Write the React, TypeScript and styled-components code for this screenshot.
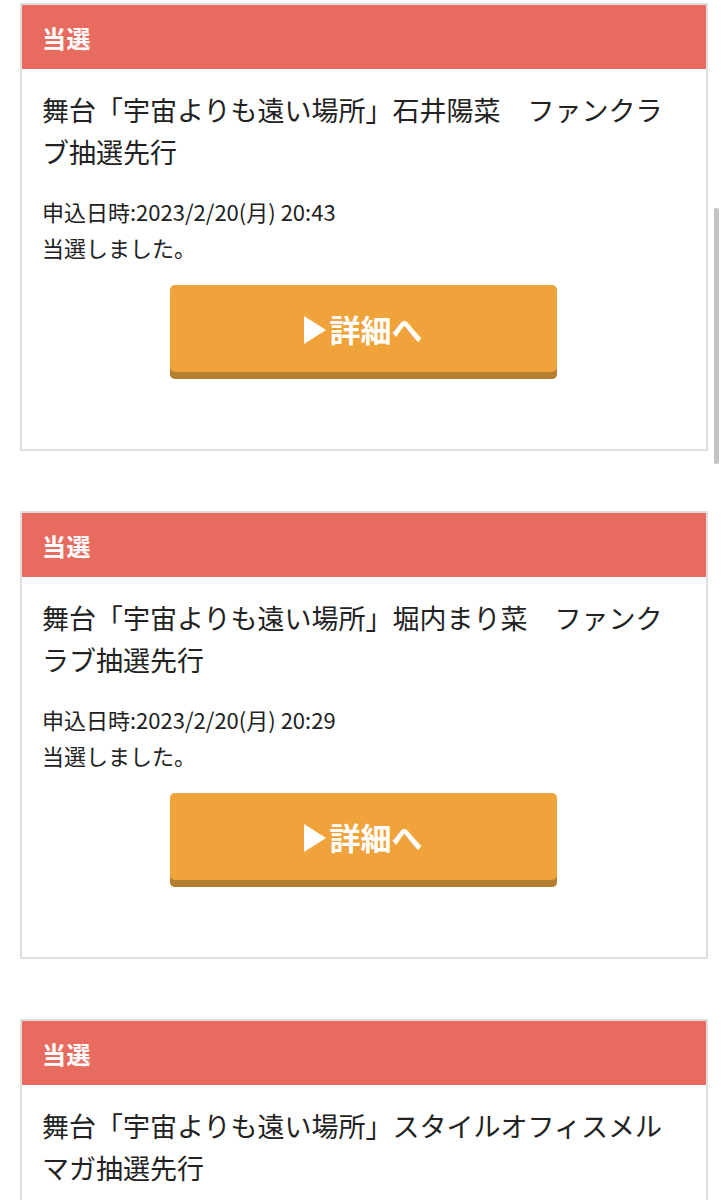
import React from "react";
import styled, { createGlobalStyle } from "styled-components";

const GlobalStyle = createGlobalStyle`
  html, body {
    margin: 0;
    padding: 0;
    background: #ffffff;
    overflow: hidden;
  }
  body {
    font-family: "Noto Sans CJK JP", "Noto Sans", sans-serif;
    color: #222222;
  }
`;

type Entry = {
  title: string;
  appliedAt?: string;
  status?: string;
};

// 3件目は画面の下で切れているのでタイトルだけ
const entries: Entry[] = [
  {
    title: "舞台「宇宙よりも遠い場所」石井陽菜　ファンクラブ抽選先行",
    appliedAt: "申込日時:2023/2/20(月) 20:43",
    status: "当選しました。",
  },
  {
    title: "舞台「宇宙よりも遠い場所」堀内まり菜　ファンクラブ抽選先行",
    appliedAt: "申込日時:2023/2/20(月) 20:29",
    status: "当選しました。",
  },
  {
    title: "舞台「宇宙よりも遠い場所」スタイルオフィスメルマガ抽選先行",
  },
];

const App = () => {
  return (
    <SPage>
      <GlobalStyle />
      <SList>
        {entries.map((entry, i) => (
          <SCard key={i}>
            <SCardHeader>当選</SCardHeader>
            <SCardBody>
              <STitle>{entry.title}</STitle>
              {entry.appliedAt && (
                <>
                  <SMeta>
                    {entry.appliedAt}
                    <br />
                    {entry.status}
                  </SMeta>
                  <SButtonRow>
                    <SDetailButton type="button">
                      <svg width="22" height="28" viewBox="0 0 22 28">
                        <path d="M0 0 L22 14 L0 28 Z" fill="#ffffff" />
                      </svg>
                      詳細へ
                    </SDetailButton>
                  </SButtonRow>
                </>
              )}
            </SCardBody>
          </SCard>
        ))}
      </SList>
      <SScrollThumb />
    </SPage>
  );
};

export default App;

const SPage = styled.div`
  position: relative;
  width: 725px;
  height: 1200px;
  overflow: hidden;
`;

const SList = styled.div`
  display: flex;
  flex-direction: column;
  gap: 60px;
  padding: 3px 0 0 20px;
`;

const SCard = styled.section`
  width: 688px;
  box-sizing: border-box;
  border: 2px solid #dedede;
  background: #ffffff;
`;

const SCardHeader = styled.div`
  height: 64px;
  display: flex;
  align-items: center;
  padding-left: 20px;
  background: #e76b5f;
  color: #ffffff;
  font-size: 24px;
  font-weight: 700;
  letter-spacing: 0.5px;
`;

const SCardBody = styled.div`
  padding: 20px 20px 70px 20px;
`;

const STitle = styled.h2`
  margin: 0;
  font-size: 27px;
  font-weight: 400;
  line-height: 42px;
  color: #222222;
`;

const SMeta = styled.p`
  margin: 20px 0 0;
  font-size: 22px;
  line-height: 36px;
  color: #222222;
`;

const SButtonRow = styled.div`
  display: flex;
  justify-content: center;
  margin-top: 20px;
  padding-right: 2px;
`;

const SDetailButton = styled.button`
  width: 387px;
  height: 94px;
  box-sizing: border-box;
  padding: 0 0 7px;
  border: none;
  border-radius: 5px;
  background: #efa33a;
  box-shadow: inset 0 -7px 0 #b57f30;
  color: #ffffff;
  font-family: inherit;
  font-size: 31px;
  font-weight: 700;
  display: flex;
  align-items: center;
  justify-content: center;
  gap: 4px;
  cursor: pointer;

  svg {
    margin-top: 2px;
  }
`;

const SScrollThumb = styled.div`
  position: absolute;
  top: 208px;
  right: 6px;
  width: 5px;
  height: 256px;
  border-radius: 3px;
  background: #c4c4c4;
`;
